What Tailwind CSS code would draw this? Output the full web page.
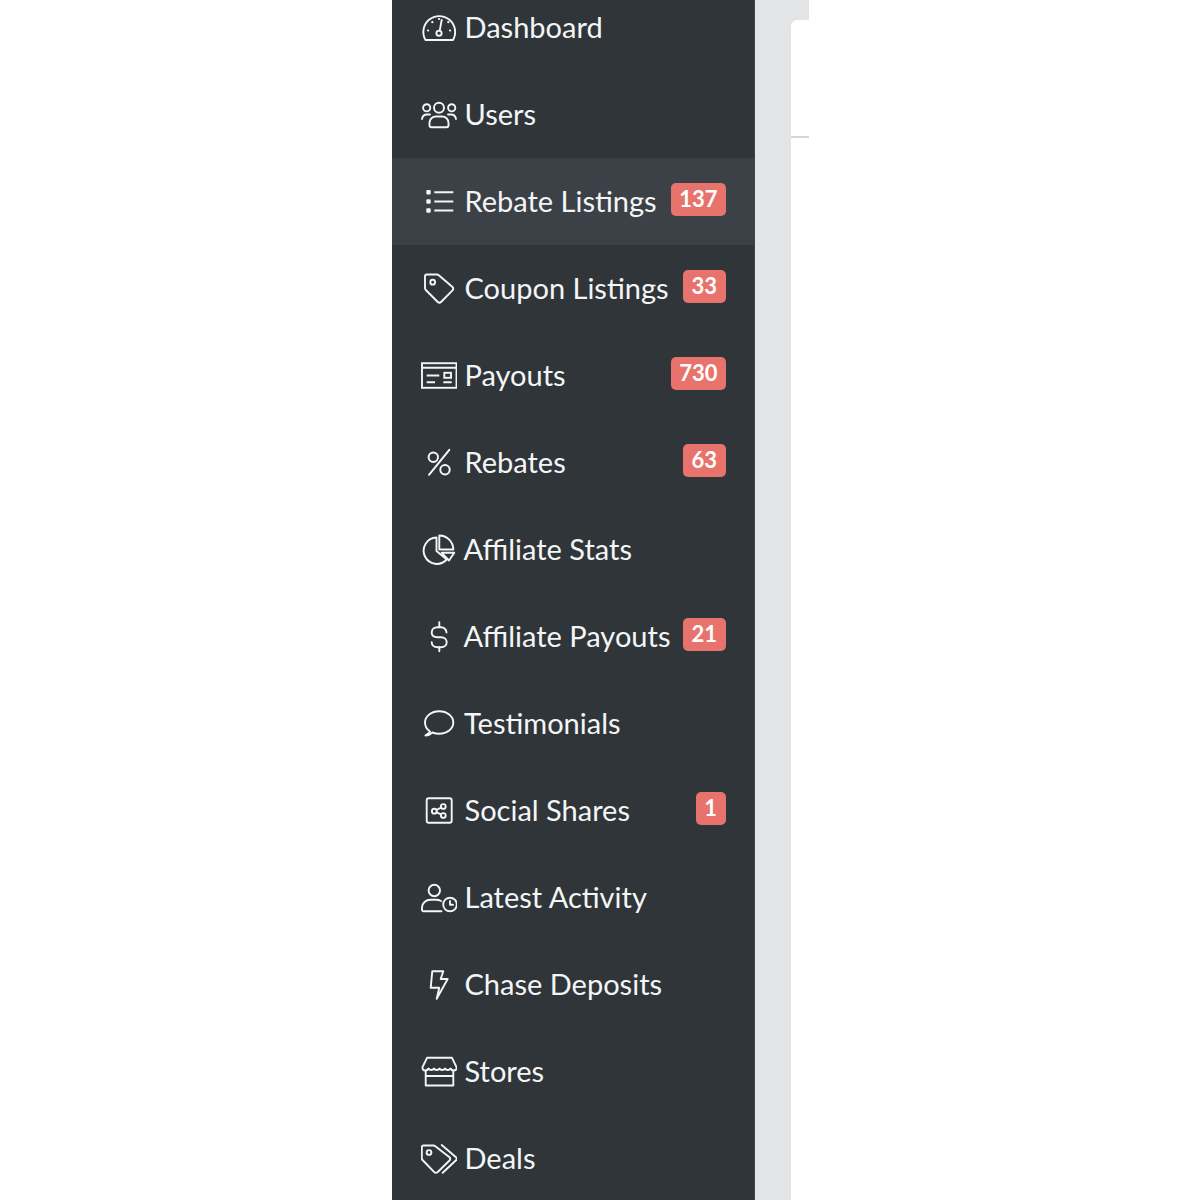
<!DOCTYPE html>
<html lang="en">
<head>
    <meta charset="UTF-8">
    <meta name="viewport" content="width=device-width, initial-scale=1.0">
    <title>Admin Sidebar</title>
    <script src="https://cdn.jsdelivr.net/npm/@tailwindcss/browser@4"></script>
</head>
<body class="bg-white font-['Lato','Liberation_Sans',sans-serif]">
    <div class="flex ml-[392px] w-[417px] h-[1200px] overflow-hidden">
        <aside class="w-[363px] shrink-0 bg-[#303539] text-[#f4f5f6] text-[29px] border-r border-[#3f4449]">
            <ul class="-mt-[16px]">
                <li class="flex items-center h-[87px] pl-[29px] pr-[28.5px] gap-[7.5px]">
                    <svg class="w-9 h-9 shrink-0 translate-y-[0.5px]" viewBox="0 0 36 36" fill="none" stroke="currentColor" stroke-width="1.9" stroke-linecap="round" stroke-linejoin="round">
                        <path d="M4.500 29.500A15.900 15.900 0 1 1 32 29.500Z"/>
                        <circle cx="18" cy="22.700" r="2.600"/>
                        <path d="M18.700 20.200L20.700 9.500"/>
                        <path d="M7 20h.1M11.300 11.700h.1M18 8.500h.1M27.300 11.700h.1M29 20h.1" stroke-width="2.200"/>
                    </svg>
                    <span class="-mt-[2px]">Dashboard</span>
                </li>
                <li class="flex items-center h-[87px] pl-[29px] pr-[28.5px] gap-[7.5px]">
                    <svg class="w-9 h-9 shrink-0 translate-y-[0.5px]" viewBox="0 0 36 36" fill="none" stroke="currentColor" stroke-width="1.9" stroke-linecap="round" stroke-linejoin="round">
                        <circle cx="18" cy="10.300" r="5"/>
                        <circle cx="5.700" cy="10.300" r="3.600"/>
                        <circle cx="30.700" cy="10.300" r="3.600"/>
                        <path d="M10.500 29.700H25.500A2 2 0 0 0 27.500 27.700V25.500C27.500 21.500 24.500 19 21 19H15C11.500 19 8.500 21.500 8.500 25.500V27.700A2 2 0 0 0 10.500 29.700Z"/>
                        <path d="M1 21.500C1.500 18.500 3.500 17 6 17H9M35 21.500C34.500 18.500 32.500 17 30 17H27"/>
                    </svg>
                    <span class="-mt-[2px]">Users</span>
                </li>
                <li class="flex items-center h-[87px] pl-[29px] pr-[28.5px] gap-[7.5px] bg-[#3c4147]">
                    <svg class="w-9 h-9 shrink-0 translate-y-[0.5px]" viewBox="0 0 36 36" fill="none" stroke="currentColor" stroke-width="1.9">
                        <path d="M13.300 7.700H32.300M13.300 17H32.300M13.300 26H32.300"/>
                        <path d="M5.300 6.500a1 1 0 0 1 1-1h2.400a1 1 0 0 1 1 1v2.400a1 1 0 0 1-1 1h-2.400a1 1 0 0 1-1-1zM5.300 15.800a1 1 0 0 1 1-1h2.400a1 1 0 0 1 1 1v2.400a1 1 0 0 1-1 1h-2.400a1 1 0 0 1-1-1zM5.300 24.800a1 1 0 0 1 1-1h2.400a1 1 0 0 1 1 1v2.400a1 1 0 0 1-1 1h-2.400a1 1 0 0 1-1-1z" fill="currentColor" stroke="none"/>
                    </svg>
                    <span class="-mt-[2px]">Rebate Listings</span>
                    <span class="ml-auto -mt-[4px] h-[33px] px-2 pb-[2px] flex items-center rounded-[5px] bg-[#e8736c] text-white text-[22px] font-bold">137</span>
                </li>
                <li class="flex items-center h-[87px] pl-[29px] pr-[28.5px] gap-[7.5px]">
                    <svg class="w-9 h-9 shrink-0 translate-y-[0.5px]" viewBox="0 0 36 36" fill="none" stroke="currentColor" stroke-width="1.9" stroke-linecap="round" stroke-linejoin="round">
                        <path d="M5.500 3H16A2.500 2.500 0 0 1 17.800 3.800L31.500 15.500A2.200 2.200 0 0 1 31.500 18.800L20 30.500A2.200 2.200 0 0 1 16.800 30.500L4.800 18.500A2.500 2.500 0 0 1 4 16.700V4.500A1.500 1.500 0 0 1 5.500 3Z"/>
                        <circle cx="11.700" cy="10.700" r="2.400"/>
                    </svg>
                    <span class="-mt-[2px]">Coupon Listings</span>
                    <span class="ml-auto -mt-[4px] h-[33px] px-[8.5px] pb-[2px] flex items-center rounded-[5px] bg-[#e8736c] text-white text-[22px] font-bold">33</span>
                </li>
                <li class="flex items-center h-[87px] pl-[29px] pr-[28.5px] gap-[7.5px]">
                    <svg class="w-9 h-9 shrink-0 translate-y-[0.5px]" viewBox="0 0 36 36" fill="none" stroke="currentColor" stroke-width="1.9">
                        <rect x="1" y="4.700" width="34.500" height="24.600"/>
                        <path d="M1 9.300H35.500M5.700 17H18.300M5.700 23.700H14M22.300 23.700H30.700"/>
                        <rect x="23.300" y="14.300" width="6.700" height="5"/>
                    </svg>
                    <span class="-mt-[2px]">Payouts</span>
                    <span class="ml-auto -mt-[4px] h-[33px] px-2 pb-[2px] flex items-center rounded-[5px] bg-[#e8736c] text-white text-[22px] font-bold">730</span>
                </li>
                <li class="flex items-center h-[87px] pl-[29px] pr-[28.5px] gap-[7.5px]">
                    <svg class="w-9 h-9 shrink-0 translate-y-[0.5px]" viewBox="0 0 36 36" fill="none" stroke="currentColor" stroke-width="2" stroke-linecap="round">
                        <path d="M28.300 4.300L8 29.300"/>
                        <circle cx="12.300" cy="11.700" r="4.700"/>
                        <circle cx="24" cy="24.300" r="4.700"/>
                    </svg>
                    <span class="-mt-[2px]">Rebates</span>
                    <span class="ml-auto -mt-[4px] h-[33px] px-[8.5px] pb-[2px] flex items-center rounded-[5px] bg-[#e8736c] text-white text-[22px] font-bold">63</span>
                </li>
                <li class="flex items-center h-[87px] pl-[29px] pr-[28.5px] gap-[6.5px]">
                    <svg class="w-9 h-9 shrink-0 translate-y-[0.5px]" viewBox="0 0 36 36" fill="none" stroke="currentColor" stroke-width="1.9" stroke-linejoin="round">
                        <path d="M15.500 5A13.200 13.200 0 1 0 25.700 27L15.500 18.500Z"/>
                        <path d="M18.300 3A14 14 0 0 1 32.300 17H18.300Z"/>
                        <path d="M20.700 20.300H33.300L28 28Z"/>
                    </svg>
                    <span class="-mt-[2px]">Affiliate Stats</span>
                </li>
                <li class="flex items-center h-[87px] pl-[29px] pr-[28.5px] gap-[6.5px]">
                    <svg class="w-9 h-9 shrink-0 translate-y-[0.5px]" viewBox="0 0 36 36" fill="none" stroke="currentColor" stroke-width="1.9" stroke-linecap="round">
                        <path d="M25.500 13C25.500 10 23 7.700 20 7.700H16.500C13 7.700 10.700 10 10.700 13C10.700 16 13 17.700 16.500 17.700H20C23.500 17.700 25.700 20 25.700 22.700C25.700 25.500 23.500 27.700 20 27.700H16.500C13 27.700 10.700 25.500 10.700 22.700"/>
                        <path d="M18.300 2.700V7.700M18.300 27.700V31.700"/>
                    </svg>
                    <span class="-mt-[2px]">Affiliate Payouts</span>
                    <span class="ml-auto -mt-[4px] h-[33px] px-[8.5px] pb-[2px] flex items-center rounded-[5px] bg-[#e8736c] text-white text-[22px] font-bold">21</span>
                </li>
                <li class="flex items-center h-[87px] pl-[29px] pr-[28.5px] gap-[7px]">
                    <svg class="w-9 h-9 shrink-0 translate-y-[0.5px]" viewBox="0 0 36 36" fill="none" stroke="currentColor" stroke-width="1.9" stroke-linejoin="round">
                        <path d="M9 25C6 23 4 20 4 16C4 9.500 10.500 4.700 18.200 4.700C26 4.700 32.300 9.500 32.300 16C32.300 22.500 26 27.300 18.200 27.300C15.500 27.300 13.500 26.800 11.500 26C9.500 27.800 7 29 4.500 29C6 27.500 8.500 27 9 25Z"/>
                    </svg>
                    <span class="-mt-[2px]">Testimonials</span>
                </li>
                <li class="flex items-center h-[87px] pl-[29px] pr-[28.5px] gap-[7.5px]">
                    <svg class="w-9 h-9 shrink-0 translate-y-[0.5px]" viewBox="0 0 36 36" fill="none" stroke="currentColor" stroke-width="1.9">
                        <rect x="5.700" y="4.700" width="25" height="24.600" rx="2"/>
                        <circle cx="13.300" cy="17.700" r="2.400"/>
                        <circle cx="22.300" cy="13" r="2.400"/>
                        <circle cx="22.300" cy="22" r="2.400"/>
                        <path d="M15.500 16.500L20 14.200M15.500 18.800L20 20.800"/>
                    </svg>
                    <span class="-mt-[2px]">Social Shares</span>
                    <span class="ml-auto -mt-[4px] h-[33px] px-[8.5px] pb-[2px] flex items-center rounded-[5px] bg-[#e8736c] text-white text-[22px] font-bold">1</span>
                </li>
                <li class="flex items-center h-[87px] pl-[29px] pr-[28.5px] gap-[7.5px]">
                    <svg class="w-9 h-9 shrink-0 translate-y-[0.5px]" viewBox="0 0 36 36" fill="none" stroke="currentColor" stroke-width="1.9" stroke-linecap="round" stroke-linejoin="round">
                        <circle cx="13.300" cy="10" r="5.700"/>
                        <path d="M20.500 30.800H2.500A1.500 1.500 0 0 1 1 29.300V27C1 22.500 5 19.300 9.500 19.300H15C17 19.300 18.500 19.700 20 20.500"/>
                        <circle cx="29" cy="24" r="6.800"/>
                        <path d="M29 20.500V24.300H32"/>
                    </svg>
                    <span class="-mt-[2px]">Latest Activity</span>
                </li>
                <li class="flex items-center h-[87px] pl-[29px] pr-[28.5px] gap-[7.5px]">
                    <svg class="w-9 h-9 shrink-0 translate-y-[0.5px]" viewBox="0 0 36 36" fill="none" stroke="currentColor" stroke-width="1.9" stroke-linejoin="round">
                        <path d="M11.300 3.700H22.300L19.700 11.500H26.700L15.700 31.300L18.300 20.300H9.700Z"/>
                    </svg>
                    <span class="-mt-[2px]">Chase Deposits</span>
                </li>
                <li class="flex items-center h-[87px] pl-[29px] pr-[28.5px] gap-[7.5px]">
                    <svg class="w-9 h-9 shrink-0 translate-y-[0.5px]" viewBox="0 0 36 36" fill="none" stroke="currentColor" stroke-width="1.9" stroke-linejoin="round">
                        <path d="M6 3.300H31L35.500 12.700V13.500A2.500 2.500 0 0 1 33 16C31 16 30 15 29.500 14C28.500 16 25 16 24 14C23 16 19.500 16 18.500 14C17.500 16 14 16 13 14C12 16 8.500 16 7.500 14C7 15 6 16 4 16A2.500 2.500 0 0 1 1.500 13.500V12.700Z"/>
                        <path d="M4.700 15.500V31H32.300V15.500M4.700 21.500H32.300"/>
                    </svg>
                    <span class="-mt-[2px]">Stores</span>
                </li>
                <li class="flex items-center h-[87px] pl-[29px] pr-[28.5px] gap-[7.5px]">
                    <svg class="w-9 h-9 shrink-0 translate-y-[0.5px]" viewBox="0 0 36 36" fill="none" stroke="currentColor" stroke-width="1.9" stroke-linecap="round" stroke-linejoin="round">
                        <path d="M2.500 4H12.500A2.500 2.500 0 0 1 14.300 4.800L28.500 15.800A2.200 2.200 0 0 1 28.500 19L16.500 30.700A2.200 2.200 0 0 1 13.300 30.700L1.500 18.500A2.500 2.500 0 0 1 .8 16.700V5.500A1.500 1.500 0 0 1 2.500 4Z"/>
                        <circle cx="8" cy="11" r="2.400"/>
                        <path d="M20.700 3.500L35 15.800A2 2 0 0 1 35 18.800L21.700 31.300"/>
                    </svg>
                    <span class="-mt-[2px]">Deals</span>
                </li>
            </ul>
        </aside>
        <main class="flex-1 bg-[#e3e4e6] pl-9 pt-5">
            <div class="h-full bg-white rounded-tl-[6px]">
                <div class="h-[118px] border-b-2 border-[#d4d6d9]"></div>
            </div>
        </main>
    </div>
</body>
</html>
